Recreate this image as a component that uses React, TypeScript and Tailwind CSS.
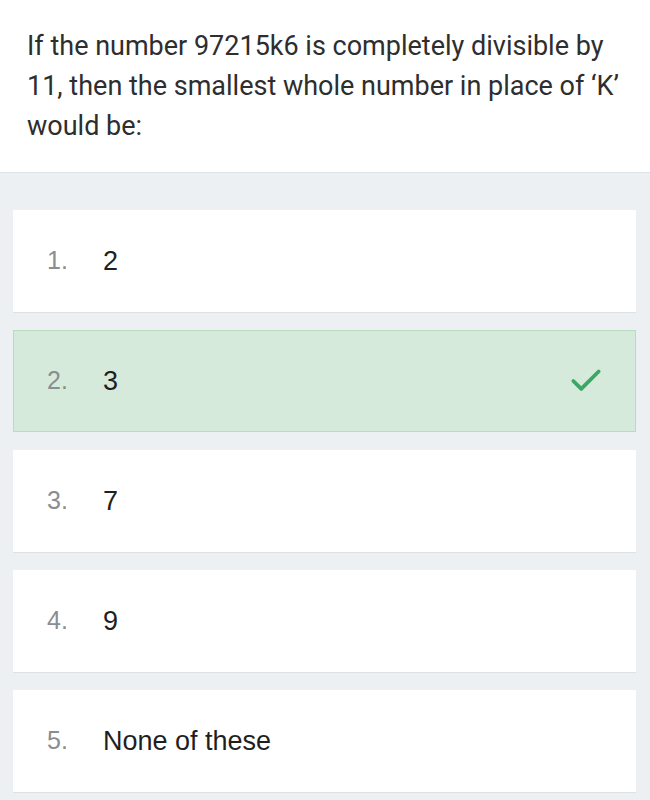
import { Check } from 'lucide-react';

const options = [
  { n: '1.', text: '2' },
  { n: '2.', text: '3', correct: true },
  { n: '3.', text: '7' },
  { n: '4.', text: '9' },
  { n: '5.', text: 'None of these' },
];

export default function App() {
  return (
    <div className="min-h-[800px] w-[650px] bg-[#edf0f2]">
      {/* Question */}
      <div className="border-b border-[#dde2e6] bg-white pl-[27px] pr-[20px] pt-[26px] pb-[26px]">
        <p className="font-['Roboto',sans-serif] text-[27px] leading-[40px] text-[#2e2e2e]">
          If the number 97215k6 is completely divisible by 11, then the smallest whole number in place of ‘K’
          would be:
        </p>
      </div>

      {/* Options */}
      <div className="flex flex-col gap-[18px] pt-[37px] pl-[13px] pr-[14px] pb-[8px] font-['Liberation_Sans',Arial,sans-serif]">
        {options.map((o) => (
          <div
            key={o.n}
            className={
              o.correct
                ? 'flex h-[102px] items-center border border-[#b9dcc1] bg-[#d5eadb] pl-[33px] pr-[30px]'
                : 'flex h-[102px] items-center border border-white bg-white pl-[33px] pr-[30px] shadow-[0_1px_0_#dde1e4]'
            }
          >
            <span className="w-[56px] text-[25px] text-[#8a8e92]">{o.n}</span>
            <span className="flex-1 text-[27px] text-[#1f1f1f]">{o.text}</span>
            {o.correct && <Check size={38} strokeWidth={2.4} className="text-[#3aa864]" />}
          </div>
        ))}
      </div>
    </div>
  );
}
